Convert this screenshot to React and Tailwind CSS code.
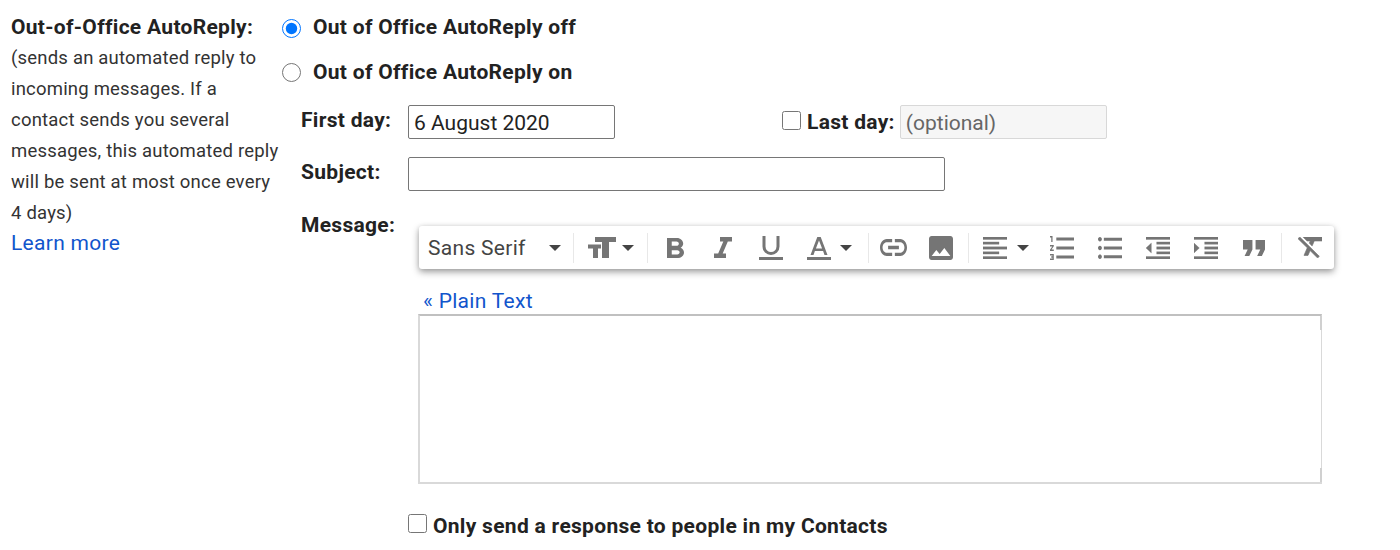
const Icon = ({ box, className, children }) => (
  <svg viewBox={box} preserveAspectRatio="none" className={`shrink-0 fill-[#757575] ${className}`}>
    {children}
  </svg>
);

const Caret = ({ className = '' }) => (
  <svg viewBox="0 0 12 6" className={`w-3 h-1.5 shrink-0 fill-[#444444] ${className}`}>
    <path d="M0 0h12L6 6z" />
  </svg>
);

const Sep = ({ className = '' }) => <div className={`w-px h-[30px] bg-[#e8e8e8] shrink-0 ${className}`} />;

const Slot = ({ children, className = 'w-[48px]' }) => (
  <div className={`flex items-center justify-center shrink-0 ${className}`}>{children}</div>
);

function Toolbar() {
  return (
    <div className="flex items-center w-[915px] h-[43px] ml-[11px] bg-white rounded-[3px] shadow-[0_3px_7px_rgba(0,0,0,0.38),0_0_4px_rgba(0,0,0,0.08)]">
      {/* font */}
      <div className="flex items-center w-[154px] pl-[9px] pr-[12px] justify-between text-[#444444]">
        <span className="pt-[2px]">Sans Serif</span>
        <Caret />
      </div>
      <Sep />
      {/* size */}
      <div className="flex items-center w-[73px] pl-[14px] gap-[6px]">
        <Icon box="0 0 28 21" className="w-[28px] h-[21px]">
          <path d="M7 0h21v5h-7v16h-7V5H7z" />
          <path d="M0 7.500h13v4H10V21H5v-9.500H0z" />
        </Icon>
        <Caret />
      </div>
      <Sep />
      {/* inline styles */}
      <Slot className="w-[51px] pl-[4px]">
        <Icon box="7 4 10.75 14" className="w-[17px] h-[20px]">
          <path d="M15.6 10.79c.97-.67 1.65-1.77 1.65-2.79 0-2.26-1.75-4-4-4H7v14h7.04c2.09 0 3.71-1.7 3.71-3.79 0-1.52-.86-2.82-2.15-3.42zM10 6.500h3c.83 0 1.5.67 1.5 1.5s-.67 1.5-1.5 1.5h-3v-3zm3.500 9H10v-3h3.500c.83 0 1.5.67 1.5 1.5s-.67 1.5-1.5 1.5z" />
        </Icon>
      </Slot>
      <Slot>
        <Icon box="6 4 12 14" className="w-[18px] h-[21px]">
          <path d="M10 4v3h2.21l-3.42 8H6v3h8v-3h-2.21l3.42-8H18V4z" />
        </Icon>
      </Slot>
      <Slot>
        <Icon box="0 0 24 24" className="w-6 h-6">
          <path d="M3.500 0h3v10.500a5.500 5.500 0 0 0 11 0V0h3v10.500a8.500 8.500 0 0 1-17 0zM0 21h24v3H0z" />
        </Icon>
      </Slot>
      <div className="flex items-center w-[73px] pl-[12px] gap-[9px]">
        <Icon box="0 0 24 24" className="w-6 h-6">
          <path fillRule="evenodd" d="M10.300 1h3.400L20.500 19h-3l-1.400-4H7.900l-1.400 4h-3zM8.900 12.500h6.200L12 4.500zM0 21h24v3H0z" />
        </Icon>
        <Caret />
      </div>
      <Sep />
      {/* link, image */}
      <Slot>
        <Icon box="2 7 20 10" className="w-[27px] h-[17px]">
          <path d="M3.900 12c0-1.710 1.390-3.100 3.100-3.100h4V7H7c-2.760 0-5 2.240-5 5s2.240 5 5 5h4v-1.900H7c-1.710 0-3.100-1.390-3.100-3.100zM8 13h8v-2H8v2zm9-6h-4v1.900h4c1.710 0 3.100 1.390 3.100 3.100s-1.390 3.100-3.100 3.100h-4V17h4c2.760 0 5-2.240 5-5s-2.240-5-5-5z" />
        </Icon>
      </Slot>
      <Slot className="w-[51px] pr-[3px]">
        <Icon box="3 3 18 18" className="w-6 h-6">
          <path d="M21 19V5c0-1.100-.9-2-2-2H5c-1.100 0-2 .9-2 2v14c0 1.100.9 2 2 2h14c1.100 0 2-.9 2-2zM8.500 13.500l2.500 3.010L14.500 12l4.500 6H5l3.500-4.500z" />
        </Icon>
      </Slot>
      <Sep />
      {/* align */}
      <div className="flex items-center w-[69px] pl-[14px] gap-[10px]">
        <Icon box="3 3 18 18" className="w-6 h-[22px] stroke-[#757575] stroke-[0.25]">
          <path d="M15 15H3v2h12v-2zm0-8H3v2h12V7zM3 13h18v-2H3v2zm0 8h18v-2H3v2zM3 3v2h18V3H3z" />
        </Icon>
        <Caret />
      </div>
      <Slot>
        <Icon box="2 4 19 16" className="w-6 h-6">
          <path d="M2 17h2v.5H3v1h1v.5H2v1h3v-4H2v1zm1-9h1V4H2v1h1v3zm-1 3h1.800L2 13.100v.9h3v-1H3.200L5 10.900V10H2v1zm5-6v2h14V5H7zm0 14h14v-2H7v2zm0-6h14v-2H7v2z" />
        </Icon>
      </Slot>
      <Slot>
        <Icon box="2.500 4.500 18.500 15" className="w-6 h-[22px]">
          <path d="M4 10.500c-.83 0-1.500.67-1.500 1.500s.67 1.500 1.500 1.500 1.500-.67 1.500-1.500-.67-1.500-1.500-1.500zm0-6c-.83 0-1.500.67-1.500 1.500S3.170 7.500 4 7.500 5.500 6.830 5.500 6 4.830 4.500 4 4.500zm0 12c-.83 0-1.500.68-1.500 1.500s.68 1.500 1.500 1.500 1.500-.68 1.500-1.500-.67-1.500-1.500-1.500zM7 19h14v-2H7v2zm0-6h14v-2H7v2zm0-8v2h14V5H7z" />
        </Icon>
      </Slot>
      <Slot>
        <Icon box="3 3 18 18" className="w-6 h-[22px] stroke-[#757575] stroke-[0.25]">
          <path d="M11 17h10v-2H11v2zm-8-5l4 4V8l-4 4zm0 9h18v-2H3v2zM3 3v2h18V3H3zm8 6h10V7H11v2zm0 4h10v-2H11v2z" />
        </Icon>
      </Slot>
      <Slot>
        <Icon box="3 3 18 18" className="w-6 h-[22px] stroke-[#757575] stroke-[0.25]">
          <path d="M3 21h18v-2H3v2zM3 8v8l4-4-4-4zm8 9h10v-2H11v2zM3 3v2h18V3H3zm8 6h10V7H11v2zm0 4h10v-2H11v2z" />
        </Icon>
      </Slot>
      <Slot>
        <Icon box="5 7 14 10" className="w-[22px] h-4">
          <path d="M6 17h3l2-4V7H5v6h3zm8 0h3l2-4V7h-6v6h3z" />
        </Icon>
      </Slot>
      <Sep className="ml-[3px] mr-[16px]" />
      <Icon box="2 5 18 16" className="w-6 h-[21px] stroke-[#757575] stroke-[0.5]">
        <path d="M3.270 5L2 6.270l6.970 6.970L6.500 19h3l1.570-3.660L16.730 21 18 19.730 3.550 5.270 3.270 5zM6 5v.18L8.820 8h2.400l-.72 1.680 2.100 2.100L14.210 8H20V5H6z" />
      </Icon>
    </div>
  );
}

const box = 'border border-[#767676] rounded-[2px] h-[34px] px-[5px] pt-px text-[21px] text-[#222222] bg-white tracking-normal';

export default function App() {
  return (
    <div className="flex w-[1400px] h-[550px] overflow-hidden bg-white text-[#222222] tracking-[0.3px] font-['Roboto',sans-serif]">
      {/* Description */}
      <div className="w-[282px] shrink-0 pl-[11px] pt-[12px]">
        <div className="text-[21px] leading-[31px] font-bold whitespace-nowrap">Out-of-Office AutoReply:</div>
        <div className="text-[18.5px] leading-[31px] text-[#333333] whitespace-nowrap tracking-[0.2px]">
          <div>(sends an automated reply to</div>
          <div>incoming messages. If a</div>
          <div>contact sends you several</div>
          <div>messages, this automated reply</div>
          <div>will be sent at most once every</div>
          <div>4 days)</div>
        </div>
        <div className="text-[21px] leading-[28px] text-[#1155cc]">Learn more</div>
      </div>

      {/* Settings */}
      <div className="flex-1 text-[21px] font-bold">
        <label className="flex items-center h-[44px] mt-[6px] gap-[12px] whitespace-nowrap">
          <input type="radio" name="reply" defaultChecked className="w-[19px] h-[19px] m-0" />
          <span>Out of Office AutoReply off</span>
        </label>
        <label className="flex items-center h-[44px] gap-[12px] whitespace-nowrap">
          <input type="radio" name="reply" className="w-[19px] h-[19px] m-0" />
          <span className="pt-[2px]">Out of Office AutoReply on</span>
        </label>

        <div className="flex items-center h-[34px] mt-[11px] ml-[19px]">
          <div className="w-[107px] pb-[2px]">First day:</div>
          <input readOnly value="6 August 2020" className={`${box} w-[207px] font-normal`} />
          <input type="checkbox" className="w-[19px] h-[19px] m-0 ml-[167px] mb-[3px]" />
          <span className="ml-[6px] mr-[5px] pt-px">Last day:</span>
          <input disabled placeholder="(optional)" className="w-[207px] h-[34px] px-[5px] pt-px border border-[#d8d8d8] rounded-[2px] bg-[#f6f6f6] text-[21px] tracking-normal font-normal placeholder:text-[#666666]" />
        </div>

        <div className="flex items-center h-[34px] mt-[18px] ml-[19px]">
          <div className="w-[107px] pb-[2px]">Subject:</div>
          <input readOnly className={`${box} w-[537px]`} />
        </div>

        <div className="flex items-start mt-[20px] ml-[19px]">
          <div className="w-[107px] leading-[29px]">Message:</div>
          <div className="mt-[15px] font-normal">
            <Toolbar />
            <div className="ml-[15px] mt-[20px] leading-[24px] text-[#1155cc]">« Plain Text</div>
            <div className="relative ml-[10px] mt-px w-[904px] h-[170px] border-2 border-r border-[#d9d9d9] border-t-[#c0c0c0]">
              <div className="absolute top-0 right-[-1px] w-[2px] h-[14px] bg-[#d0d0d0]" />
              <div className="absolute bottom-0 right-[-1px] w-[2px] h-[14px] bg-[#d0d0d0]" />
            </div>
            <label className="flex items-center h-[24px] mt-[30px] gap-[6px] whitespace-nowrap font-bold">
              <input type="checkbox" className="w-[19px] h-[19px] m-0 mb-[5px]" />
              <span className="pt-[2px]">Only send a response to people in my Contacts</span>
            </label>
          </div>
        </div>
      </div>
    </div>
  );
}
